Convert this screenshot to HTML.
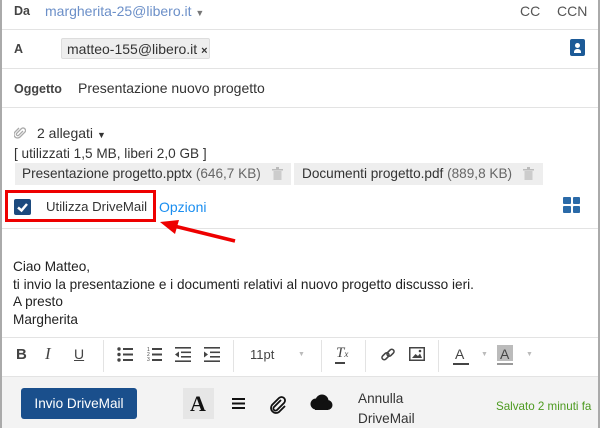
<!DOCTYPE html>
<html><head><style>
*{margin:0;padding:0;box-sizing:border-box}
body{width:600px;height:428px;overflow:hidden;font-family:"Liberation Sans",sans-serif;font-size:13.6px;color:#333;background:#fff;position:relative}
.frame{position:absolute;inset:0;border-left:2px solid #aaa;border-right:2px solid #aaa;pointer-events:none;z-index:5}
.t{position:absolute;white-space:nowrap;line-height:16px}
.hr{position:absolute;left:2px;right:2px;height:1px;background:#e3e3e3}
.lbl{font-weight:bold;color:#444;font-size:12.5px}
.sep{position:absolute;top:340px;width:1px;height:32px;background:#e3e3e3}
.dd{position:absolute;top:351px;font-size:7px;color:#bbb}
svg{position:absolute}
</style></head><body>
<div class="frame"></div>
<div class="t lbl" style="left:14px;top:3px">Da</div>
<div class="t" style="left:45px;top:3px;color:#6b8fc8;font-size:14px">margherita-25@libero.it <span style="font-size:9px;color:#777">▼</span></div>
<div class="t" style="left:520px;top:3px;color:#555;font-size:14px">CC</div>
<div class="t" style="left:557px;top:3px;color:#555;font-size:14px">CCN</div>
<div class="hr" style="top:29px"></div>
<div class="t lbl" style="left:14px;top:41px">A</div>
<div style="position:absolute;left:61px;top:38px;width:149px;height:21px;background:#eee;border:1px solid #ddd;border-radius:2px"></div>
<div class="t" style="left:67px;top:41px;font-size:14px">matteo-155@libero.it <b style="font-size:11px">×</b></div>
<div style="position:absolute;left:570px;top:39px;width:15px;height:17px;background:#1c5a97;border-radius:2px"><div style="position:absolute;left:5px;top:4px;width:5px;height:5px;border-radius:50%;background:#fff"></div><div style="position:absolute;left:4px;top:10px;width:7px;height:4px;border-radius:3px 3px 0 0;background:#fff"></div></div>
<div class="hr" style="top:68px"></div>
<div class="t lbl" style="left:14px;top:81px">Oggetto</div>
<div class="t" style="left:78px;top:80px;font-size:14px">Presentazione nuovo progetto</div>
<div class="hr" style="top:107px"></div>
<svg style="left:14px;top:126px" width="12" height="14" viewBox="0 0 12 14"><path d="M9 5 L4.5 9.5 a1.5 1.5 0 0 1 -2 -2 L7.5 2.5 a2.5 2.5 0 0 1 3.5 3.5 L6 11 a3.5 3.5 0 0 1 -5 -5 L5 2" fill="none" stroke="#aaa" stroke-width="1.3"/></svg>
<div class="t" style="left:37px;top:125px;font-size:14px">2 allegati <span style="font-size:9px">▼</span></div>
<div class="t" style="left:14px;top:146px;font-size:13.6px">[ utilizzati 1,5 MB, liberi 2,0 GB ]</div>
<div style="position:absolute;left:15px;top:163px;width:276px;height:22px;background:#eee"></div>
<div style="position:absolute;left:294px;top:163px;width:249px;height:22px;background:#eee"></div>
<div class="t" style="left:22px;top:166px;font-size:13.6px">Presentazione progetto.pptx <span style="color:#666">(646,7 KB)</span></div>
<div class="t" style="left:302px;top:166px;font-size:13.6px">Documenti progetto.pdf <span style="color:#666">(889,8 KB)</span></div>
<svg style="left:272px;top:167px" width="11" height="13"><rect x="0" y="2" width="11" height="1.5" fill="#bbb"/><rect x="4" y="0" width="3" height="2" fill="#bbb"/><rect x="1.5" y="4" width="8" height="9" fill="#ccc"/></svg>
<svg style="left:523px;top:167px" width="11" height="13"><rect x="0" y="2" width="11" height="1.5" fill="#bbb"/><rect x="4" y="0" width="3" height="2" fill="#bbb"/><rect x="1.5" y="4" width="8" height="9" fill="#ccc"/></svg>
<div style="position:absolute;left:5px;top:190px;width:151px;height:32px;border:3px solid #e00"></div>
<div style="position:absolute;left:14px;top:199px;width:17px;height:16px;background:#1c4a7e;border-radius:2px"></div>
<svg style="left:14px;top:199px" width="17" height="16"><path d="M4 8.5 L7.5 11.5 L13 5" fill="none" stroke="#fff" stroke-width="2.5"/></svg>
<div class="t" style="left:46px;top:199px;font-size:13.2px">Utilizza DriveMail</div>
<div class="t" style="left:159px;top:199px;color:#1a8ef0;font-size:14px">Opzioni</div>
<div style="position:absolute;left:563px;top:197px;width:17px;height:16px;display:grid;grid-template-columns:7.5px 7.5px;grid-template-rows:7px 7px;gap:2px"><i style="background:#2a6aa8;border-radius:1px"></i><i style="background:#2a6aa8;border-radius:1px"></i><i style="background:#2a6aa8;border-radius:1px"></i><i style="background:#2a6aa8;border-radius:1px"></i></div>
<div class="hr" style="top:228px"></div>
<svg style="left:155px;top:218px" width="85" height="30"><line x1="80" y1="23" x2="15" y2="7" stroke="#e00" stroke-width="3.5"/><polygon points="5,4 24,2 20,16" fill="#e00"/></svg>
<div class="t" style="left:13px;top:258px;line-height:17.5px;color:#222">Ciao Matteo,<br>ti invio la presentazione e i documenti relativi al nuovo progetto discusso ieri.<br>A presto<br>Margherita</div>
<div class="hr" style="top:337px"></div>
<div class="t" style="left:16px;top:347px;font-weight:bold;font-size:15px;color:#444">B</div>
<div class="t" style="left:45px;top:346px;font-style:italic;font-family:'Liberation Serif';font-size:17px;color:#444">I</div>
<div class="t" style="left:74px;top:346px;font-size:14px;color:#444;text-decoration:underline">U</div>
<div class="sep" style="left:103px"></div>
<svg style="left:117px;top:347px" width="16" height="15" fill="#444"><circle cx="2" cy="2" r="1.7"/><circle cx="2" cy="7.5" r="1.7"/><circle cx="2" cy="13" r="1.7"/><rect x="6" y="1" width="10" height="2"/><rect x="6" y="6.5" width="10" height="2"/><rect x="6" y="12" width="10" height="2"/></svg>
<svg style="left:147px;top:346px" width="15" height="16" fill="#444"><text x="0" y="5" font-size="5" font-family="Liberation Sans">1</text><text x="0" y="10" font-size="5" font-family="Liberation Sans">2</text><text x="0" y="15" font-size="5" font-family="Liberation Sans">3</text><rect x="5" y="2" width="10" height="2"/><rect x="5" y="7.5" width="10" height="2"/><rect x="5" y="13" width="10" height="2"/></svg>
<svg style="left:175px;top:347px" width="16" height="15" fill="#444"><rect x="0" y="0" width="16" height="1.6"/><rect x="6" y="4.5" width="10" height="1.6"/><rect x="6" y="9" width="10" height="1.6"/><rect x="0" y="13.4" width="16" height="1.6"/><path d="M0 7.5 L4 4.5 L4 10.5 Z"/></svg>
<svg style="left:204px;top:347px" width="16" height="15" fill="#444"><rect x="0" y="0" width="16" height="1.6"/><rect x="6" y="4.5" width="10" height="1.6"/><rect x="6" y="9" width="10" height="1.6"/><rect x="0" y="13.4" width="16" height="1.6"/><path d="M4 7.5 L0 4.5 L0 10.5 Z"/></svg>
<div class="sep" style="left:233px"></div>
<div class="t" style="left:250px;top:347px;font-size:13px;color:#444">11pt</div>
<div class="dd" style="left:298px">▼</div>
<div class="sep" style="left:321px"></div>
<div class="t" style="left:336px;top:345px;font-size:15px;color:#444;font-style:italic;font-family:'Liberation Serif'">T<span style="font-size:9px">x</span></div>
<div style="position:absolute;left:335px;top:362px;width:10px;height:1.5px;background:#444"></div>
<div class="sep" style="left:365px"></div>
<svg style="left:380px;top:347px" width="16" height="16" fill="none" stroke="#444" stroke-width="1.6"><rect x="1.5" y="7" width="8" height="4.5" rx="2.2" transform="rotate(-45 5.5 9.25)"/><rect x="6.5" y="3.5" width="8" height="4.5" rx="2.2" transform="rotate(-45 10.5 5.75)"/></svg>
<svg style="left:409px;top:347px" width="16" height="14"><rect x="0.75" y="0.75" width="14.5" height="12.5" fill="#fff" stroke="#444" stroke-width="1.5"/><path d="M3 11 L6.5 7 L9 9 L11 6.5 L13 11 Z" fill="#444"/><circle cx="11" cy="4" r="1.3" fill="#444"/></svg>
<div class="sep" style="left:438px"></div>
<div class="t" style="left:455px;top:346px;font-size:14px;color:#444">A</div>
<div style="position:absolute;left:453px;top:363px;width:16px;height:2px;background:#444"></div>
<div class="dd" style="left:481px">▼</div>
<div style="position:absolute;left:497px;top:345px;width:16px;height:16px;background:#bbb"></div>
<div class="t" style="left:500px;top:346px;font-size:14px;color:#444">A</div>
<div style="position:absolute;left:497px;top:363px;width:16px;height:2px;background:#999"></div>
<div class="dd" style="left:526px">▼</div>
<div style="position:absolute;left:2px;right:2px;top:376px;bottom:0;background:#f3f3f3;border-top:1px solid #e3e3e3"></div>
<div style="position:absolute;left:21px;top:388px;width:116px;height:31px;background:#1a4f8c;border-radius:3px;color:#fff;font-size:13.6px;line-height:31px;text-align:center">Invio DriveMail</div>
<div style="position:absolute;left:183px;top:388px;width:31px;height:31px;background:#e6e6e6"></div>
<div class="t" style="left:190px;top:393px;font-family:'Liberation Serif';font-weight:bold;font-size:22px;color:#111;line-height:22px">A</div>
<svg style="left:232px;top:398px" width="13" height="11" fill="#111"><rect y="0" width="13" height="2"/><rect y="4.5" width="13" height="2"/><rect y="9" width="13" height="2"/></svg>
<svg style="left:268px;top:394px" width="20" height="20" fill="none" stroke="#111" stroke-width="1.8"><path d="M13 6 L6 13 a2 2 0 0 0 3 3 L16 9 a3.5 3.5 0 0 0 -5 -5 L4 11 a5 5 0 0 0 7 7 L17 12"/></svg>
<svg style="left:309px;top:394px" width="24" height="17" fill="#111"><circle cx="7" cy="10" r="5.5"/><circle cx="13" cy="7" r="6.5"/><circle cx="18.5" cy="11" r="5"/><rect x="6" y="10" width="13" height="6"/></svg>
<div class="t" style="left:358px;top:389px;line-height:20px;font-size:13.6px">Annulla<br>DriveMail</div>
<div class="t" style="left:496px;top:399px;color:#4c9a1f;font-size:11.6px">Salvato 2 minuti fa</div>
</body></html>
